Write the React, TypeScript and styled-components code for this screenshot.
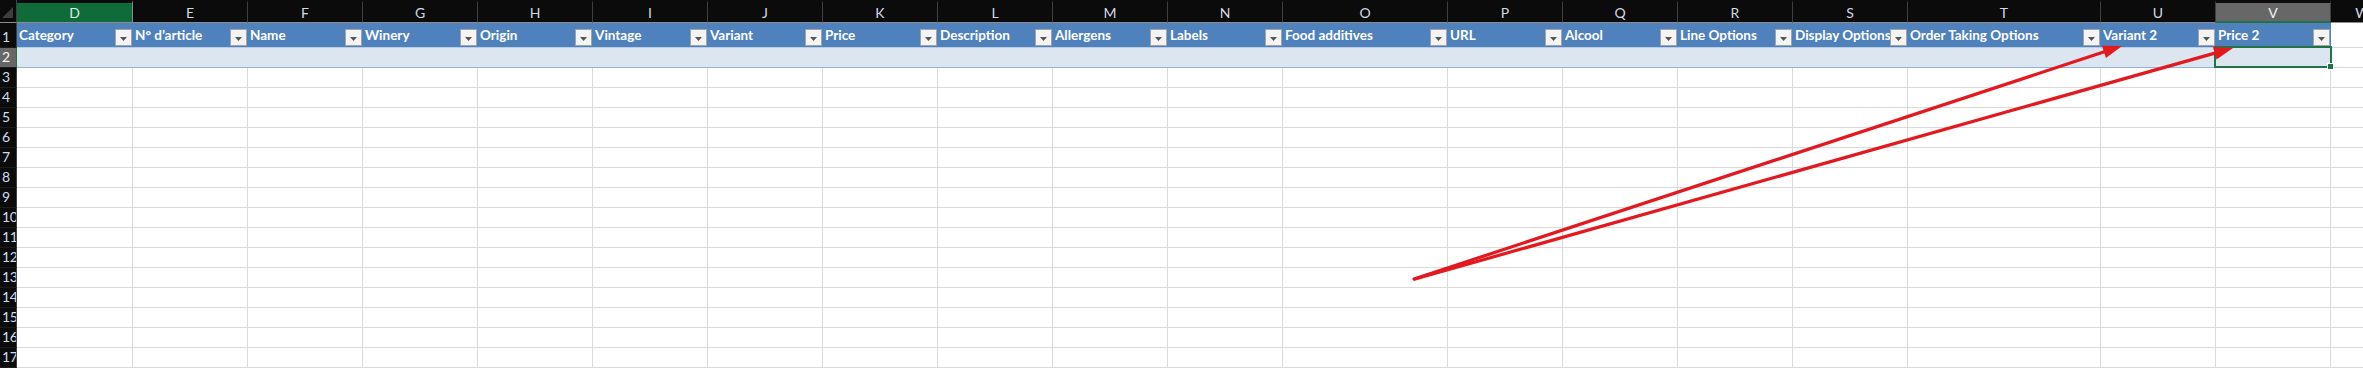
import React from 'react'
import styled, { createGlobalStyle, css } from 'styled-components'

const Colors = {
  headerBg: '#0b0b0b',
  headerText: '#d3dae3',
  headerLine: '#404040',
  headerBottom: '#8c8c8c',
  activeGreen: '#106b3a',
  selectGray: '#676767',
  excelGreen: '#217346',
  tableBlue: '#4f81bd',
  tableBand: '#dce6f1',
  tableLine: '#95b3d7',
  grid: '#dadada',
  arrow: '#e3191f',
}

const GlobalStyle = createGlobalStyle`
  html, body {
    margin: 0;
    padding: 0;
    background: #ffffff;
    overflow: hidden;
  }
  body {
    font-family: Lato, "Liberation Sans", Arial, sans-serif;
  }
`

type Column = { letter: string; width: number; label?: string }

const columns: Column[] = [
  { letter: 'D', width: 116, label: 'Category' },
  { letter: 'E', width: 115, label: 'N° d’article' },
  { letter: 'F', width: 115, label: 'Name' },
  { letter: 'G', width: 115, label: 'Winery' },
  { letter: 'H', width: 115, label: 'Origin' },
  { letter: 'I', width: 115, label: 'Vintage' },
  { letter: 'J', width: 115, label: 'Variant' },
  { letter: 'K', width: 115, label: 'Price' },
  { letter: 'L', width: 115, label: 'Description' },
  { letter: 'M', width: 115, label: 'Allergens' },
  { letter: 'N', width: 115, label: 'Labels' },
  { letter: 'O', width: 165, label: 'Food additives' },
  { letter: 'P', width: 115, label: 'URL' },
  { letter: 'Q', width: 115, label: 'Alcool' },
  { letter: 'R', width: 115, label: 'Line Options' },
  { letter: 'S', width: 115, label: 'Display Options' },
  { letter: 'T', width: 193, label: 'Order Taking Options' },
  { letter: 'U', width: 115, label: 'Variant 2' },
  { letter: 'V', width: 115, label: 'Price 2' },
  { letter: 'W', width: 64 },
]

const ACTIVE_COL = 'D'
const SELECTED_COL = 'V'
const SELECTED_ROW = 2
const LAST_ROW = 17

const Sheet = styled.div`
  position: relative;
  width: 2363px;
  height: 368px;
  overflow: hidden;
  background: #ffffff;
`

const Grid = styled.div`
  display: grid;
  grid-template-columns: 17px ${columns.map((c) => `${c.width}px`).join(' ')};
  grid-template-rows: 23px 25px repeat(${LAST_ROW - 1}, 20px);
  width: max-content;
`

const Corner = styled.div`
  box-sizing: border-box;
  display: flex;
  align-items: flex-end;
  justify-content: flex-end;
  padding: 0 3px 4px 0;
  background: ${Colors.headerBg};
  border-right: 1px solid ${Colors.headerLine};
  border-bottom: 1px solid ${Colors.headerBottom};
`

const CornerTriangle = styled.span`
  width: 0;
  height: 0;
  border-left: 11px solid transparent;
  border-bottom: 11px solid #3e3e3e;
`

type HeaderState = 'normal' | 'active' | 'selected'

const ColHeader = styled.div<{ $state: HeaderState }>`
  box-sizing: border-box;
  display: flex;
  align-items: center;
  justify-content: center;
  border-top: 3px solid ${Colors.headerBg};
  border-right: 1px solid ${Colors.headerLine};
  border-bottom: 1px solid ${Colors.headerBottom};
  background: ${Colors.headerBg};
  color: ${Colors.headerText};
  font-size: 14px;
  line-height: 1;
  padding-top: 1px;
  ${({ $state }) =>
    $state === 'active' &&
    css`
      background: ${Colors.activeGreen};
      color: #d9eee0;
      border-right-color: #8a8a8a;
    `}
  ${({ $state }) =>
    $state === 'selected' &&
    css`
      background: ${Colors.selectGray};
      color: #f2f2f2;
      border-bottom: 2px solid ${Colors.excelGreen};
    `}
`

const RowHeader = styled.div<{ $selected?: boolean }>`
  box-sizing: border-box;
  display: flex;
  align-items: flex-end;
  padding: 0 0 2px 2px;
  background: ${({ $selected }) => ($selected ? Colors.selectGray : Colors.headerBg)};
  color: ${({ $selected }) => ($selected ? '#f4f6f8' : '#cfdcec')};
  border-right: 1px solid ${({ $selected }) => ($selected ? Colors.excelGreen : Colors.headerLine)};
  border-bottom: 1px solid #1c1c1c;
  font-size: 14px;
  line-height: 16px;
  letter-spacing: -0.3px;
  white-space: nowrap;
  overflow: hidden;
`

const TableHeadCell = styled.div`
  box-sizing: border-box;
  display: flex;
  align-items: center;
  min-width: 0;
  padding: 0 1px 0 2px;
  background: ${Colors.tableBlue};
  border-bottom: 1px solid #b8cce4;
  color: #ffffff;
  font-weight: 700;
  font-size: 13.5px;
`

const HeadLabel = styled.span`
  flex: 1;
  min-width: 0;
  overflow: hidden;
  white-space: nowrap;
`

const FilterButton = styled.span`
  box-sizing: border-box;
  flex: none;
  align-self: flex-end;
  margin-bottom: 1px;
  width: 17px;
  height: 17px;
  display: flex;
  align-items: center;
  justify-content: center;
  padding-top: 2px;
  background: #f4f4f4;
  border: 1px solid #a3a3a3;
`

const TableBodyCell = styled.div`
  box-sizing: border-box;
  position: relative;
  background: ${Colors.tableBand};
  border-bottom: 1px solid ${Colors.tableLine};
`

const Cell = styled.div`
  box-sizing: border-box;
  background: #ffffff;
  border-right: 1px solid ${Colors.grid};
  border-bottom: 1px solid ${Colors.grid};
`

const Selection = styled.div`
  position: absolute;
  left: -2px;
  top: -2px;
  width: 118px;
  height: 22px;
  box-sizing: border-box;
  border: 2px solid ${Colors.excelGreen};
  pointer-events: none;
`

const FillHandle = styled.span`
  position: absolute;
  right: -3px;
  bottom: -3px;
  width: 5px;
  height: 5px;
  background: ${Colors.excelGreen};
  outline: 1px solid #ffffff;
`

const Annotation = styled.svg`
  position: absolute;
  left: 0;
  top: 0;
  pointer-events: none;
`

const FilterIcon = () => (
  <svg width="7" height="4" viewBox="0 0 7 4">
    <polygon points="0,0 7,0 3.5,4" fill="#555" />
  </svg>
)

type Pt = [number, number]

const Arrow = ({ from, to }: { from: Pt; to: Pt }) => {
  const [x1, y1] = from
  const [x2, y2] = to
  const len = Math.hypot(x2 - x1, y2 - y1)
  const ux = (x2 - x1) / len
  const uy = (y2 - y1) / len
  const headLen = 19
  const headW = 6.5
  const bx = x2 - ux * headLen
  const by = y2 - uy * headLen
  const points = [
    `${x2},${y2}`,
    `${bx - uy * headW},${by + ux * headW}`,
    `${bx + uy * headW},${by - ux * headW}`,
  ].join(' ')
  return (
    <g>
      <line x1={x1} y1={y1} x2={bx + ux * 2} y2={by + uy * 2} stroke={Colors.arrow} strokeWidth={3.2} strokeLinecap="round" />
      <polygon points={points} fill={Colors.arrow} />
    </g>
  )
}

const headerState = (letter: string): HeaderState =>
  letter === ACTIVE_COL ? 'active' : letter === SELECTED_COL ? 'selected' : 'normal'

export default function App() {
  const rows = Array.from({ length: LAST_ROW - 2 }, (_, i) => i + 3)

  return (
    <>
      <GlobalStyle />
      <Sheet>
        <Grid>
          <Corner>
            <CornerTriangle />
          </Corner>
          {columns.map((c) => (
            <ColHeader key={c.letter} $state={headerState(c.letter)}>
              {c.letter}
            </ColHeader>
          ))}

          <RowHeader>1</RowHeader>
          {columns.map((c) =>
            c.label ? (
              <TableHeadCell key={c.letter}>
                <HeadLabel>{c.label}</HeadLabel>
                <FilterButton>
                  <FilterIcon />
                </FilterButton>
              </TableHeadCell>
            ) : (
              <Cell key={c.letter} />
            ),
          )}

          <RowHeader $selected>{SELECTED_ROW}</RowHeader>
          {columns.map((c) =>
            c.label ? (
              <TableBodyCell key={c.letter}>
                {c.letter === SELECTED_COL && (
                  <Selection>
                    <FillHandle />
                  </Selection>
                )}
              </TableBodyCell>
            ) : (
              <Cell key={c.letter} />
            ),
          )}

          {rows.map((r) => (
            <React.Fragment key={r}>
              <RowHeader>{r}</RowHeader>
              {columns.map((c) => (
                <Cell key={c.letter} />
              ))}
            </React.Fragment>
          ))}
        </Grid>

        <Annotation width="2363" height="368" viewBox="0 0 2363 368">
          <Arrow from={[1414, 279]} to={[2122, 46]} />
          <Arrow from={[1415, 279]} to={[2233, 48]} />
        </Annotation>
      </Sheet>
    </>
  )
}
